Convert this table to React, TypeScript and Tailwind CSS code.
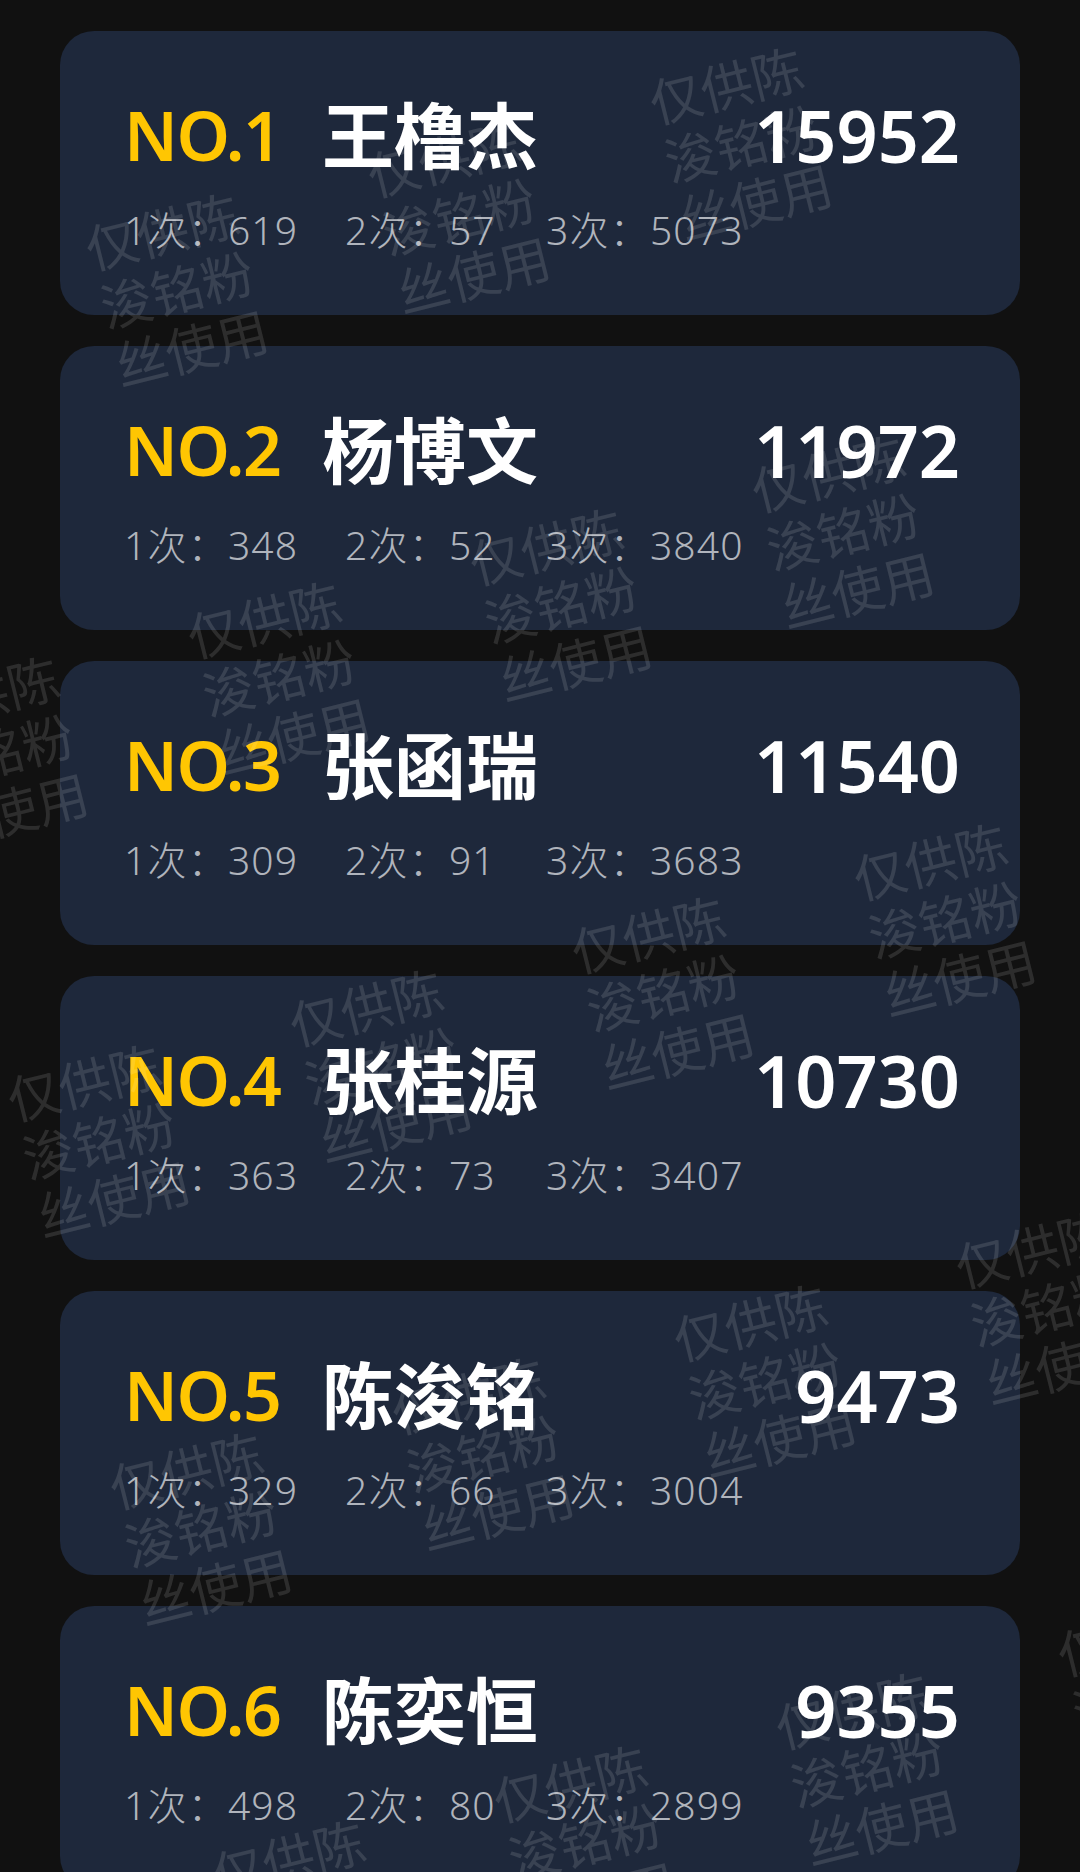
const rows = [
  { rank: 1, name: '王橹杰', total: 15952, a: 619, b: 57, c: 5073 },
  { rank: 2, name: '杨博文', total: 11972, a: 348, b: 52, c: 3840 },
  { rank: 3, name: '张函瑞', total: 11540, a: 309, b: 91, c: 3683 },
  { rank: 4, name: '张桂源', total: 10730, a: 363, b: 73, c: 3407 },
  { rank: 5, name: '陈浚铭', total: 9473, a: 329, b: 66, c: 3004 },
  { rank: 6, name: '陈奕恒', total: 9355, a: 498, b: 80, c: 2899 },
];

// watermark centres, a tilted grid laid over the whole page
const marks = [
  [-3, 753], [99, 1141], [201, 1529], [303, 1917],
  [177, 290], [279, 678], [381, 1066], [483, 1454], [585, 1842],
  [459, 217], [561, 605], [663, 993], [765, 1381], [867, 1769],
  [741, 144], [843, 532], [945, 920], [1047, 1308], [1149, 1696],
];

const sans = "font-['Noto_Sans','Noto_Sans_CJK_SC',sans-serif]";

function RankCard({ row }: { row: (typeof rows)[number] }) {
  return (
    <div className="h-[284px] shrink-0 rounded-[34px] bg-[#1e283b] pl-[64px] pr-[60px] pt-[68px]">
      <div className="flex h-[72px] items-center">
        <span className="w-[198px] text-[68px] font-semibold leading-none tracking-[-1.5px] text-[#ffc602]">
          NO.{row.rank}
        </span>
        <span className="text-[72px] font-bold leading-none text-white">{row.name}</span>
        <span className="ml-auto text-[72px] font-semibold leading-none text-white">{row.total}</span>
      </div>

      <div className="mt-[38px] flex h-[40px] items-center text-[39px] font-light leading-none tracking-[1.2px] text-[#b0b4bc]">
        <span className="w-[221px]">1次：{row.a}</span>
        <span className="w-[201px]">2次：{row.b}</span>
        <span>3次：{row.c}</span>
      </div>
    </div>
  );
}

export default function App() {
  return (
    <div className={`relative h-[1872px] w-full overflow-hidden bg-[#111111] ${sans}`}>
      <div className="flex flex-col gap-[31px] px-[60px] pt-[31px]">
        {rows.map((r) => (
          <RankCard key={r.rank} row={r} />
        ))}
      </div>

      {/* watermark overlay */}
      <div className="pointer-events-none absolute inset-0">
        {marks.map(([x, y], i) => (
          <div
            key={i}
            className="absolute flex w-[170px] -translate-x-1/2 -translate-y-1/2 -rotate-[14deg] flex-col items-center text-[52px] leading-[60px] text-white/[0.12]"
            style={{ left: x, top: y }}
          >
            <span>仅供陈</span>
            <span>浚铭粉</span>
            <span>丝使用</span>
          </div>
        ))}
      </div>
    </div>
  );
}
